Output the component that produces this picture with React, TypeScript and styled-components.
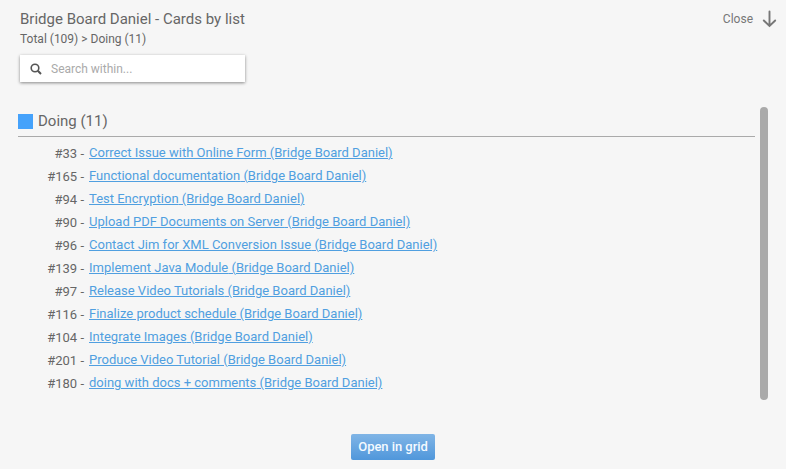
import React from "react";
import styled, { createGlobalStyle } from "styled-components";

const GlobalStyle = createGlobalStyle`
  body { margin: 0; background: #f5f5f5; font-family: Roboto, sans-serif; color: #666; }
  * { box-sizing: border-box; }
`;
const Dialog = styled.div`
  width: 786px; height: 469px; display: flex; flex-direction: column; background: #f6f6f6;
`;
const Header = styled.header`
  height: 107px; padding: 9px 9px 0 20px; display: flex; justify-content: space-between; align-items: flex-start;
`;
const Title = styled.h1`
  margin: 0; font-size: 15px; line-height: 20px; font-weight: 400; white-space: nowrap;
`;
const Crumbs = styled.div`
  font-size: 12px; line-height: 20px;
`;
const Search = styled.label`
  display: flex; align-items: center; gap: 9px; width: 225px; height: 27px; margin-top: 6px; padding-left: 10px;
  background: #fff; box-shadow: 0 1px 3px rgba(0, 0, 0, 0.45);
`;
const SearchInput = styled.input`
  border: 0; outline: 0; padding: 0; width: 170px; background: none; font: 12px Roboto, sans-serif;
  &::placeholder { color: #aaa; opacity: 1; }
`;
const Close = styled.button`
  display: flex; align-items: center; gap: 9px; height: 20px; padding: 0; border: 0; background: none;
  font: 12px Roboto, sans-serif; color: #777;
`;
const Content = styled.main`
  display: flex; justify-content: space-between; height: 293px; padding: 0 18px;
`;
const Group = styled.section`
  width: 737px;
`;
const GroupTitle = styled.h2`
  display: flex; align-items: center; gap: 5px; margin: 0 0 4px; height: 30px; padding-bottom: 1px;
  border-bottom: 1px solid #aaa; font-size: 15px; font-weight: 400;
`;
const Swatch = styled.span`
  width: 15px; height: 15px; background: #45a2fb;
`;
const Row = styled.div`
  display: grid; grid-template-columns: 66px 1fr; column-gap: 5px; height: 23px; line-height: 23px; font-size: 13px;
`;
const CardNumber = styled.span`
  text-align: right; padding-top: 1px;
`;
const CardLink = styled.a`
  color: #509fe0; text-decoration: underline; justify-self: start;
`;
const Scrollbar = styled.div`
  width: 8px; height: 293px; border-radius: 4px; background: #aaa;
`;
const Footer = styled.footer`
  display: flex; justify-content: center; padding-top: 34px;
`;
const OpenButton = styled.button`
  width: 84px; height: 26px; padding: 0 0 2px; border: 0; border-radius: 2px; color: #f4faff;
  background: linear-gradient(#80b5e6, #5097db); font: 500 13px Roboto, sans-serif; letter-spacing: -0.05px;
`;

const cards: [number, string][] = [
  [33, "Correct Issue with Online Form"],
  [165, "Functional documentation"],
  [94, "Test Encryption"],
  [90, "Upload PDF Documents on Server"],
  [96, "Contact Jim for XML Conversion Issue"],
  [139, "Implement Java Module"],
  [97, "Release Video Tutorials"],
  [116, "Finalize product schedule"],
  [104, "Integrate Images"],
  [201, "Produce Video Tutorial"],
  [180, "doing with docs + comments"],
];

export default function App() {
  return (
    <Dialog>
      <GlobalStyle />
      <Header>
        <div>
          <Title>Bridge Board Daniel - Cards by list</Title>
          <Crumbs>Total (109) &gt; Doing (11)</Crumbs>
          <Search>
            <svg width="12" height="12" viewBox="0 0 12 12" fill="none" stroke="#555" strokeWidth="1.6">
              <circle cx="5" cy="5" r="3.8" />
              <path d="M7.8 7.8 11 11" strokeWidth="2" />
            </svg>
            <SearchInput placeholder="Search within..." />
          </Search>
        </div>
        <Close>
          Close
          <svg width="15" height="18" viewBox="0 0 15 18" fill="none" stroke="#777" strokeWidth="1.9" strokeLinecap="round">
            <path d="M7.5 1.5V15.5M1.8 10.5 7.5 16 13.2 10.5" />
          </svg>
        </Close>
      </Header>
      <Content>
        <Group>
          <GroupTitle><Swatch />Doing (11)</GroupTitle>
          {cards.map(([id, name]) => (
            <Row key={id}>
              <CardNumber>#{id} -</CardNumber>
              <CardLink>{name} (Bridge Board Daniel)</CardLink>
            </Row>
          ))}
        </Group>
        <Scrollbar />
      </Content>
      <Footer><OpenButton>Open in grid</OpenButton></Footer>
    </Dialog>
  );
}
